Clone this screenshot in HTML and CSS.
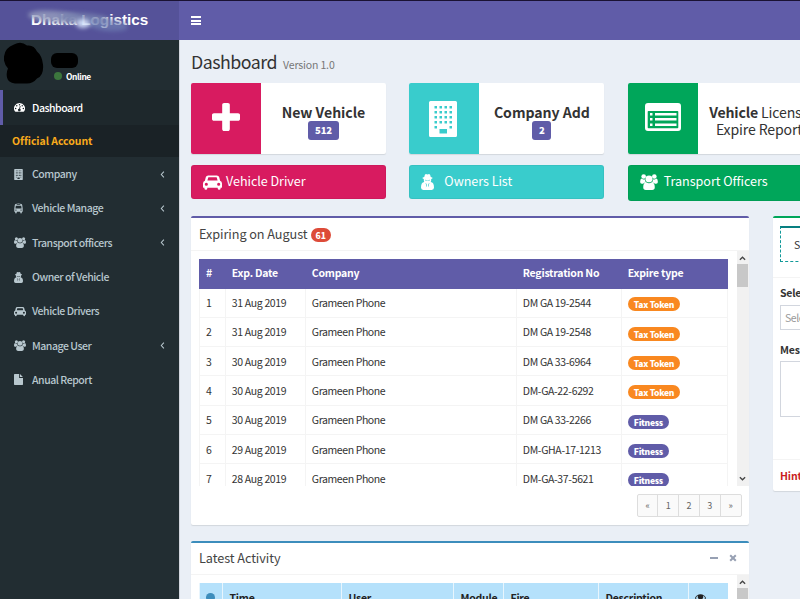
FILE: index.html
```html
<!DOCTYPE html>
<html lang="en">
<head>
<meta charset="utf-8">
<title>Dashboard</title>
<link rel="stylesheet" href="styles.css">
</head>
<body>
<svg class="defs" aria-hidden="true">
  <symbol id="plus" viewBox="192 128 1408 1408"><path d="M1600 736v192q0 40-28 68t-68 28h-416v416q0 40-28 68t-68 28h-192q-40 0-68-28t-28-68v-416h-416q-40 0-68-28t-28-68v-192q0-40 28-68t68-28h416v-416q0-40 28-68t68-28h192q40 0 68 28t28 68v416h416q40 0 68 28t28 68z"/></symbol>
  <symbol id="car" viewBox="0 0 40 30"><path fill-rule="evenodd" d="M11 0h18q4 0 5 3.500L36 11.500Q40 13 40 17v8q0 1-1 1h-2v1.500a3 3 0 0 1-6 0V26H9v1.500a3 3 0 0 1-6 0V26H1q-1 0-1-1v-8q0-4 4-5.500L6 3.500Q7 0 11 0zM11 4.500 9.300 11h21.400L29 4.500q-.2-.5-1-.5H12q-.8 0-1 .5zM7 15.500a3.300 3.300 0 1 0 0 6.600 3.300 3.300 0 0 0 0-6.600zm26 0a3.300 3.300 0 1 0 0 6.600 3.300 3.300 0 0 0 0-6.600z"/></symbol>
  <symbol id="users" viewBox="0 0 40 36"><circle cx="8" cy="5.500" r="5.200"/><circle cx="32" cy="5.500" r="5.200"/><circle cx="20" cy="11" r="7.800"/><path d="M3.500 10Q8 14 12 11q-2 4 1 8-5 0-6 3H4q-4 0-4-4 0-7 3.500-8zM36.500 10Q32 14 28 11q2 4-1 8 5 0 6 3h3q4 0 4-4 0-7-3.500-8zM13.500 18.500q6.500 4.500 13 0Q33 19 33 30q0 6-6 6H13q-6 0-6-6 0-11 6.500-11.500z"/></symbol>
  <symbol id="building" viewBox="0 0 28 36"><path fill-rule="evenodd" d="M1.500 0h25Q28 0 28 1.500v33q0 1.500-1.500 1.500h-25Q0 36 0 34.500v-33Q0 0 1.500 0zM5.500 5v2.500H8V5zm5 0v2.500H13V5zm5 0v2.500H18V5zm5 0v2.500H23V5zM5.500 10v2.500H8V10zm5 0v2.500H13V10zm5 0v2.500H18V10zm5 0v2.500H23V10zM5.500 15v2.500H8V15zm5 0v2.500H13V15zm5 0v2.500H18V15zm5 0v2.500H23V15zM5.500 20v2.500H8V20zm5 0v2.500H13V20zm5 0v2.500H18V20zm5 0v2.500H23V20zM5.500 25v2.500H8V25zm15 0v2.500H23V25zM10.500 28v4.500H18V28z"/></symbol>
  <symbol id="secret" viewBox="0 0 28 34"><path fill-rule="evenodd" d="M10.500 0 14 1l3.500-1q2.500 0 3.500 6 4 1 4 2.300 0 1.200-3 2.200.2 4-1 6.500Q28 18 28 29q0 5-5 5H5q-5 0-5-5 0-11 7-12-1.200-2.500-1-6.500-3-1-3-2.200Q3 7 7 6q1-6 3.500-6zM8.500 12l.6 2h3.700l1.200-1 1.200 1h3.700l.6-2q-5.500 1-11 0zM9 19.500l2.500 3.500-1 6 2.500-5-1-3.500zm10 0-2.500 3.500 1 6-2.500-5 1-3.500z"/></symbol>
  <symbol id="bus" viewBox="0 0 30 34"><path fill-rule="evenodd" d="M5 2q10-4 20 0 2 1 2.500 4L29 17v11h-3v3a2.500 2.500 0 0 1-5 0v-3H9v3a2.500 2.500 0 0 1-5 0v-3H1V17L2.500 6Q3 3 5 2zM9 3v2h12V3zM6 8 4.700 17h20.600L24 8zm.5 12a2.300 2.300 0 1 0 0 4.600 2.300 2.300 0 0 0 0-4.600zm17 0a2.300 2.300 0 1 0 0 4.600 2.300 2.300 0 0 0 0-4.600z"/></symbol>
  <symbol id="file" viewBox="0 0 28 34"><path d="M2 0h14v12h12v20q0 2-2 2H2q-2 0-2-2V2q0-2 2-2zM18.500.2 27.800 9.500h-9.300z"/></symbol>
  <symbol id="gauge" viewBox="0 0 34 28"><path fill-rule="evenodd" d="M17 0a17 17 0 0 1 14.500 26q-.8 1.500-2 1.500h-25q-1.200 0-2-1.500A17 17 0 0 1 17 0zm0 3a2.300 2.300 0 1 0 0 4.600A2.300 2.300 0 0 0 17 3zM8.500 6.500a2.300 2.300 0 1 0 0 4.600 2.300 2.300 0 0 0 0-4.600zm17 0a2.300 2.300 0 1 0 0 4.600 2.300 2.300 0 0 0 0-4.600zM5 15a2.300 2.300 0 1 0 0 4.600A2.300 2.300 0 0 0 5 15zm24 0a2.300 2.300 0 1 0 0 4.600 2.300 2.300 0 0 0 0-4.600zM18 9l-2 8.500a4 4 0 1 0 2.700.7L20.500 9.500z"/></symbol>
  <symbol id="list" viewBox="0 0 36 28"><path fill-rule="evenodd" d="M3 0h30q3 0 3 3v22q0 3-3 3H3q-3 0-3-3V3q0-3 3-3zm.5 8q-.8 0-.8.800V24.500q0 .8.800.8h29q.8 0 .8-.8V8.800q0-.8-.8-.8z"/><path d="M5 10h2.500v2.500H5zM10 10h21.500v2.500H10zM5 15h2.500v2.500H5zM10 15h21.500v2.500H10zM5 20.500h2.500V23H5zM10 20.500h21.500V23H10z"/></symbol>
  <symbol id="left" viewBox="0 0 6 10"><path d="M5 1 1.300 5 5 9" fill="none" stroke="currentColor" stroke-width="1.500"/></symbol>
  <symbol id="eye" viewBox="0 0 36 24"><path fill-rule="evenodd" d="M18 0q12 0 18 12-6 12-18 12T0 12Q6 0 18 0zM10 4Q5 7 3 12q5 9 15 9t15-9q-2-5-7-8a9 9 0 1 1-16 0z"/></symbol>
</svg>

<header class="topbar">
  <div class="brand"><span>Dhaka Logistics</span><i class="smear smear-a"></i><i class="smear smear-b"></i><i class="smear smear-c"></i><i class="smear smear-d"></i></div>
  <div class="nav"><span class="burger"></span></div>
</header>

<div class="shell">
  <aside class="sidebar">
    <div class="user">
      <svg class="avatar" viewBox="0 0 40 41"><path d="M10 2q7-4 13 1 7-1 10 6 5 4 6 13 1 11-6 14-4 5-10 5H11q-7-1-8-6-1-5 1-9-5-6-4-12Q1 5 10 2z"/></svg>
      <div class="who"><span class="name"></span><span class="online"><i></i>Online</span></div>
    </div>
    <nav>
      <a class="item active"><svg class="ic gauge"><use href="#gauge"/></svg><span>Dashboard</span></a>
      <div class="section">Official Account</div>
      <a class="item"><svg class="ic narrow"><use href="#building"/></svg><span>Company</span><svg class="arrow"><use href="#left"/></svg></a>
      <a class="item"><svg class="ic narrow"><use href="#bus"/></svg><span>Vehicle Manage</span><svg class="arrow"><use href="#left"/></svg></a>
      <a class="item"><svg class="ic wide"><use href="#users"/></svg><span>Transport officers</span><svg class="arrow"><use href="#left"/></svg></a>
      <a class="item"><svg class="ic narrow"><use href="#secret"/></svg><span>Owner of Vehicle</span></a>
      <a class="item"><svg class="ic wide"><use href="#car"/></svg><span>Vehicle Drivers</span></a>
      <a class="item"><svg class="ic wide"><use href="#users"/></svg><span>Manage User</span><svg class="arrow"><use href="#left"/></svg></a>
      <a class="item"><svg class="ic narrow"><use href="#file"/></svg><span>Anual Report</span></a>
    </nav>
  </aside>

  <main class="content">
    <h1><span class="t-title">Dashboard</span><small>Version 1.0</small></h1>

    <section class="cards">
      <div class="stack">
        <div class="info"><div class="tile pink"><svg class="i-plus"><use href="#plus"/></svg></div><div class="label"><b>New Vehicle</b><span class="count">512</span></div></div>
        <a class="btn pink"><svg class="b-car"><use href="#car"/></svg><span>Vehicle Driver</span></a>
      </div>
      <div class="stack">
        <div class="info"><div class="tile teal"><svg class="i-building"><use href="#building"/></svg></div><div class="label"><b>Company Add</b><span class="count">2</span></div></div>
        <a class="btn teal"><svg class="b-secret"><use href="#secret"/></svg><span>Owners List</span></a>
      </div>
      <div class="stack">
        <div class="info"><div class="tile green"><svg class="i-list"><use href="#list"/></svg></div><div class="label plain"><span><b>Vehicle</b> License</span><span>Expire Report</span></div></div>
        <a class="btn green tall"><svg class="b-users"><use href="#users"/></svg><span>Transport Officers</span></a>
      </div>
    </section>

    <section class="columns">
      <div class="main-col">
        <div class="box violet">
          <div class="box-head"><span class="t-exp">Expiring on August</span><span class="pill red">61</span></div>
          <div class="scroll">
            <div class="view">
              <table class="grid">
                <colgroup><col class="c1"><col class="c2"><col class="c3"><col class="c4"><col class="c5"></colgroup>
                <thead><tr><th>#</th><th>Exp. Date</th><th>Company</th><th>Registration No</th><th>Expire type</th></tr></thead>
                <tbody>
                  <tr><td>1</td><td>31 Aug 2019</td><td>Grameen Phone</td><td>DM GA 19-2544</td><td><span class="pill orange">Tax Token</span></td></tr>
                  <tr><td>2</td><td>31 Aug 2019</td><td>Grameen Phone</td><td>DM GA 19-2548</td><td><span class="pill orange">Tax Token</span></td></tr>
                  <tr><td>3</td><td>30 Aug 2019</td><td>Grameen Phone</td><td>DM GA 33-6964</td><td><span class="pill orange">Tax Token</span></td></tr>
                  <tr><td>4</td><td>30 Aug 2019</td><td>Grameen Phone</td><td>DM-GA-22-6292</td><td><span class="pill orange">Tax Token</span></td></tr>
                  <tr><td>5</td><td>30 Aug 2019</td><td>Grameen Phone</td><td>DM GA 33-2266</td><td><span class="pill purple">Fitness</span></td></tr>
                  <tr><td>6</td><td>29 Aug 2019</td><td>Grameen Phone</td><td>DM-GHA-17-1213</td><td><span class="pill purple">Fitness</span></td></tr>
                  <tr><td>7</td><td>28 Aug 2019</td><td>Grameen Phone</td><td>DM-GA-37-5621</td><td><span class="pill purple">Fitness</span></td></tr>
                </tbody>
              </table>
            </div>
            <div class="bar"><svg class="chev" viewBox="0 0 8 5"><path d="M1 4 4 1l3 3"/></svg><i class="thumb"></i><svg class="chev last" viewBox="0 0 8 5"><path d="M1 1l3 3 3-3"/></svg></div>
          </div>
          <div class="pager"><div><a>«</a><a>1</a><a>2</a><a>3</a><a>»</a></div></div>
        </div>

        <div class="box blue">
          <div class="box-head"><span class="t-act">Latest Activity</span><span class="tools"><i class="minus"></i><svg class="close" viewBox="0 0 8 8"><path d="M1.200 1.200l5.600 5.600M6.800 1.200 1.200 6.800"/></svg></span></div>
          <div class="scroll">
            <div class="view">
              <div class="activity"><span><i class="dot"></i></span><span>Time</span><span>User</span><span>Module</span><span>Fire</span><span>Description</span><span><svg class="eye"><use href="#eye"/></svg></span></div>
            </div>
            <div class="bar"><svg class="chev" viewBox="0 0 8 5"><path d="M1 4 4 1l3 3"/></svg><i class="thumb"></i></div>
          </div>
        </div>
      </div>

      <div class="side-col">
        <div class="box sms">
          <div class="tabs"><span class="tab">SMS</span></div>
          <div class="form">
            <label>Select</label>
            <div class="select">Select</div>
            <label class="msg">Message</label>
            <div class="area"></div>
          </div>
          <div class="hint">Hint:</div>
        </div>
      </div>
    </section>
  </main>
</div>
</body>
</html>
```

FILE: styles.css
```css
* { box-sizing: border-box; }
html, body { margin: 0; height: 599px; overflow: hidden; }
body {
  font-family: "Noto Sans CJK SC", "Open Sans", sans-serif;
  font-size: 10.500px;
  letter-spacing: -.4px;
  line-height: 16px;
  color: #333;
  background: #eaeff6;
  white-space: nowrap;
}
svg { fill: currentColor; display: block; flex: none; }
.defs { position: absolute; width: 0; height: 0; }

.topbar { display: flex; height: 40px; background: #605ca8; border-top: 1px solid #1a1233; }
.brand {
  position: relative; width: 179px; background: #555299; color: #fff;
  font: bold 15.300px/38px "Liberation Sans", sans-serif; letter-spacing: 0; padding-left: 31px; overflow: hidden;
}
.smear { position: absolute; border-radius: 50%; filter: blur(2px); }
.smear-a { left: 28px; top: 10px; width: 54px; height: 12px; background: #949bbd; opacity: .85; transform: rotate(5deg); }
.smear-b { left: 58px; top: 12px; width: 52px; height: 11px; background: #7883b0; opacity: .8; transform: rotate(4deg); }
.smear-c { left: 88px; top: 18px; width: 40px; height: 12px; background: #6f7fb4; opacity: .7; transform: rotate(5deg); }
.smear-d { left: 76px; top: 18px; width: 14px; height: 9px; background: #dce9ff; opacity: .85; }
.nav { flex: 1; padding: 15px 12px; }
.burger { display: block; width: 10px; height: 9px; border-top: 2px solid #fff; border-bottom: 2px solid #fff; background: linear-gradient(#fff, #fff) 0 1.500px / 10px 2px no-repeat; }

.shell { display: flex; height: 559px; }
.sidebar { width: 179px; flex: none; background: #222d32; color: #b8c7ce; }
.user { display: flex; height: 50px; padding: 2px 4px; }
.avatar { width: 40px; height: 42px; fill: #000; }
.who { margin-left: 7px; padding-top: 11px; }
.name { display: block; width: 27px; height: 15px; border-radius: 6px; background: #000; }
.online { display: flex; align-items: center; height: 15px; margin-left: 3px; font-size: 8.400px; letter-spacing: -.4px; font-weight: 700; color: #fff; }
.online i { width: 8px; height: 8px; margin-right: 4px; border-radius: 50%; background: #3c763d; }
.item { display: flex; align-items: center; height: 34.300px; padding-left: 14px; padding-right: 14px; font-weight: 500; letter-spacing: -.46px; }
.item span { flex: 1; }
.item.active { height: 35px; padding-left: 11px; border-left: 3px solid #605ca8; background: #1e282c; color: #fff; }
.ic { height: 11px; margin-right: 8px; }
.narrow { width: 9px; margin-right: 9px; }
.wide { width: 12px; margin-right: 6px; }
.gauge { width: 11px; height: 9px; margin-right: 7px; }
.arrow { width: 5px; height: 7px; margin-left: 0; }
.section { height: 32px; line-height: 32px; padding-left: 12px; background: #1a2226; color: #f9ab1c; font-weight: bold; letter-spacing: -.05px; }

.content { flex: 1; min-width: 0; padding-left: 12px; overflow: hidden; box-shadow: inset 1px 0 #d2d6de; }
h1 { display: flex; align-items: baseline; height: 43px; margin: 0; padding-top: 9px; font-size: 17.800px; line-height: 24px; font-weight: 400; letter-spacing: -.52px; }
.t-title { width: 84px; }
h1 small { margin-left: 8px; font-size: 10.500px; color: #777; letter-spacing: -.15px; }
.cards { display: flex; gap: 23.350px; }
.stack { width: 195px; flex: none; }
.info { display: flex; height: 71px; background: #fff; border-radius: 2px; box-shadow: 0 1px 1px rgba(0,0,0,.1); overflow: hidden; }
.tile { display: flex; align-items: center; justify-content: center; width: 70px; flex: none; color: #fff; }
.pink { background: #d81b60; }
.teal { background: #39cccc; }
.green { background: #00a65a; }
.i-plus { width: 28px; height: 28px; margin-top: -3px; }
.i-building { width: 28px; height: 36px; margin-right: 3px; }
.i-list { width: 36px; height: 28px; margin-top: -3px; }
.label { flex: 1; display: flex; flex-direction: column; align-items: center; padding-top: 20px; font-size: 14.100px; line-height: 18px; letter-spacing: -.05px; }
.label.plain { flex: none; width: 123px; line-height: 17px; padding-top: 21px; letter-spacing: -.15px; }
.count { display: block; height: 19px; padding: 0 6.500px; border-radius: 3px; background: #605ca8; color: #fff; font-size: 9.500px; line-height: 19px; font-weight: 900; }
.btn { display: flex; align-items: center; height: 34px; margin-top: 11px; padding: 0 12px 2px; border-radius: 3px; color: #fff; font-size: 12.600px; letter-spacing: -.05px; box-shadow: inset 0 0 0 1px rgba(0,0,0,.05); }
.btn.tall { height: 36px; padding-bottom: 4px; }
.btn svg { position: relative; top: 1px; }
.b-car { width: 19px; height: 15px; margin-right: 4px; }
.b-secret { width: 13px; height: 16px; margin-right: 10px; }
.b-users { width: 18px; height: 16px; margin-right: 6px; }

.columns { display: flex; gap: 24px; margin-top: 15px; }
.main-col { width: 558px; flex: none; }
.side-col { width: 195px; flex: none; }
.box { border-top: 2px solid; border-radius: 2px; background: #fff; box-shadow: 0 1px 1px rgba(0,0,0,.1); }
.violet { height: 309px; border-color: #605ca8; }
.blue { height: 200px; margin-top: 16px; border-color: #3c8dbc; }
.box-head { display: flex; align-items: center; height: 33px; padding: 0 8px; border-bottom: 1px solid #f4f4f4; font-size: 12.700px; letter-spacing: -.07px; color: #444; }
.blue .box-head { height: 32px; padding-bottom: 2px; }
.scroll { display: flex; height: 235px; overflow: hidden; }
.view { flex: 1; padding: 8px 9px 0 8px; }
.bar { display: flex; flex-direction: column; align-items: center; width: 12px; padding-top: 5px; background: #f1f1f1; }
.chev { width: 7px; height: 5px; margin-right: 1px; fill: none; stroke: #444; stroke-width: 1.500; }
.thumb { width: 11px; height: 23px; margin-top: 3px; margin-right: 1px; background: #c8c8c8; }
.chev.last { margin-top: auto; margin-bottom: 5px; }
.grid { width: 529px; table-layout: fixed; border-collapse: separate; border-spacing: 0; }
.c1 { width: 27px; } .c2 { width: 80px; } .c3 { width: 211px; } .c4 { width: 105px; } .c5 { width: 106px; }
.grid th { height: 29.500px; padding: 0 5.800px 1px; background: #605ca8; color: #fff; text-align: left; font-weight: bold; letter-spacing: -.22px; }
.grid td { height: 29.330px; padding: 1px 5.800px 0; border-right: 1px solid #f4f4f4; border-bottom: 1px solid #f4f4f4; }
.grid td:first-child { border-left: 1px solid #f4f4f4; padding-left: 6px; }
.grid td:nth-child(2), .grid td:nth-child(4) { letter-spacing: -.34px; }
.grid th:first-child { padding-left: 7px; }
.pill { display: inline-block; height: 14px; padding: 0 6px; border-radius: 7px; color: #fff; font-size: 8.500px; line-height: 14px; font-weight: 900; letter-spacing: -.28px; vertical-align: middle; }
.red { margin-left: 3px; margin-top: 2px; padding: 0 5px; letter-spacing: 0; background: #dd4b39; }
.orange { background: #f98820; }
.purple { background: #605ca8; }
.pager { display: flex; justify-content: flex-end; padding: 8px 7.500px; }
.pager div { display: flex; height: 23px; border: 1px solid #ddd; border-radius: 2px; background: #fafafa; }
.pager a { width: 20.800px; text-align: center; line-height: 21px; font-size: 9px; letter-spacing: 0; color: #666; }
.pager a:first-child { width: 19.500px; }
.pager a + a { border-left: 1px solid #ddd; }
.tools { display: flex; align-items: center; margin-left: auto; margin-right: 4px; gap: 11px; }
.minus { width: 8px; height: 2px; background: #97a0b3; }
.close { width: 8px; height: 8px; stroke: #97a0b3; stroke-width: 2; }
.activity { display: grid; grid-template-columns: 23px 119px 112px 50px 95px 90px 40px; width: 529px; height: 29px; line-height: 29px; background: #b5e1fb; color: #222; font-weight: bold; letter-spacing: -.25px; }
.activity span { padding-left: 6.500px; border-left: 1px solid #e8f5fd; }
.dot { display: block; width: 9px; height: 9px; margin: 10px 0 0 -.5px; border-radius: 50%; background: #3c8dbc; }
.eye { width: 11px; height: 8px; margin: 11px 0 0 -.5px; }

.sms { height: 275px; border-color: #00a65a; }
.tabs { height: 60px; padding: 8px 7px; border-bottom: 1px solid #f4f4f4; }
.tab { display: block; width: 80px; height: 36px; padding-left: 13px; line-height: 34px; border: 1px dashed #199; border-top: 2px solid #087f80; }
.form { height: 182px; padding: 7px; border-bottom: 1px solid #f4f4f4; }
.form label { display: block; height: 20px; line-height: 16px; font-weight: bold; letter-spacing: -.2px; }
.select { height: 25px; padding-left: 4px; line-height: 23px; border: 1px solid #d2d6de; color: #999; }
.form .msg { margin-top: 12px; height: 19px; }
.area { height: 56px; border: 1px solid #d2d6de; }
.hint { padding-left: 7px; line-height: 32px; color: #c9211e; font-weight: bold; letter-spacing: -.1px; }
```
